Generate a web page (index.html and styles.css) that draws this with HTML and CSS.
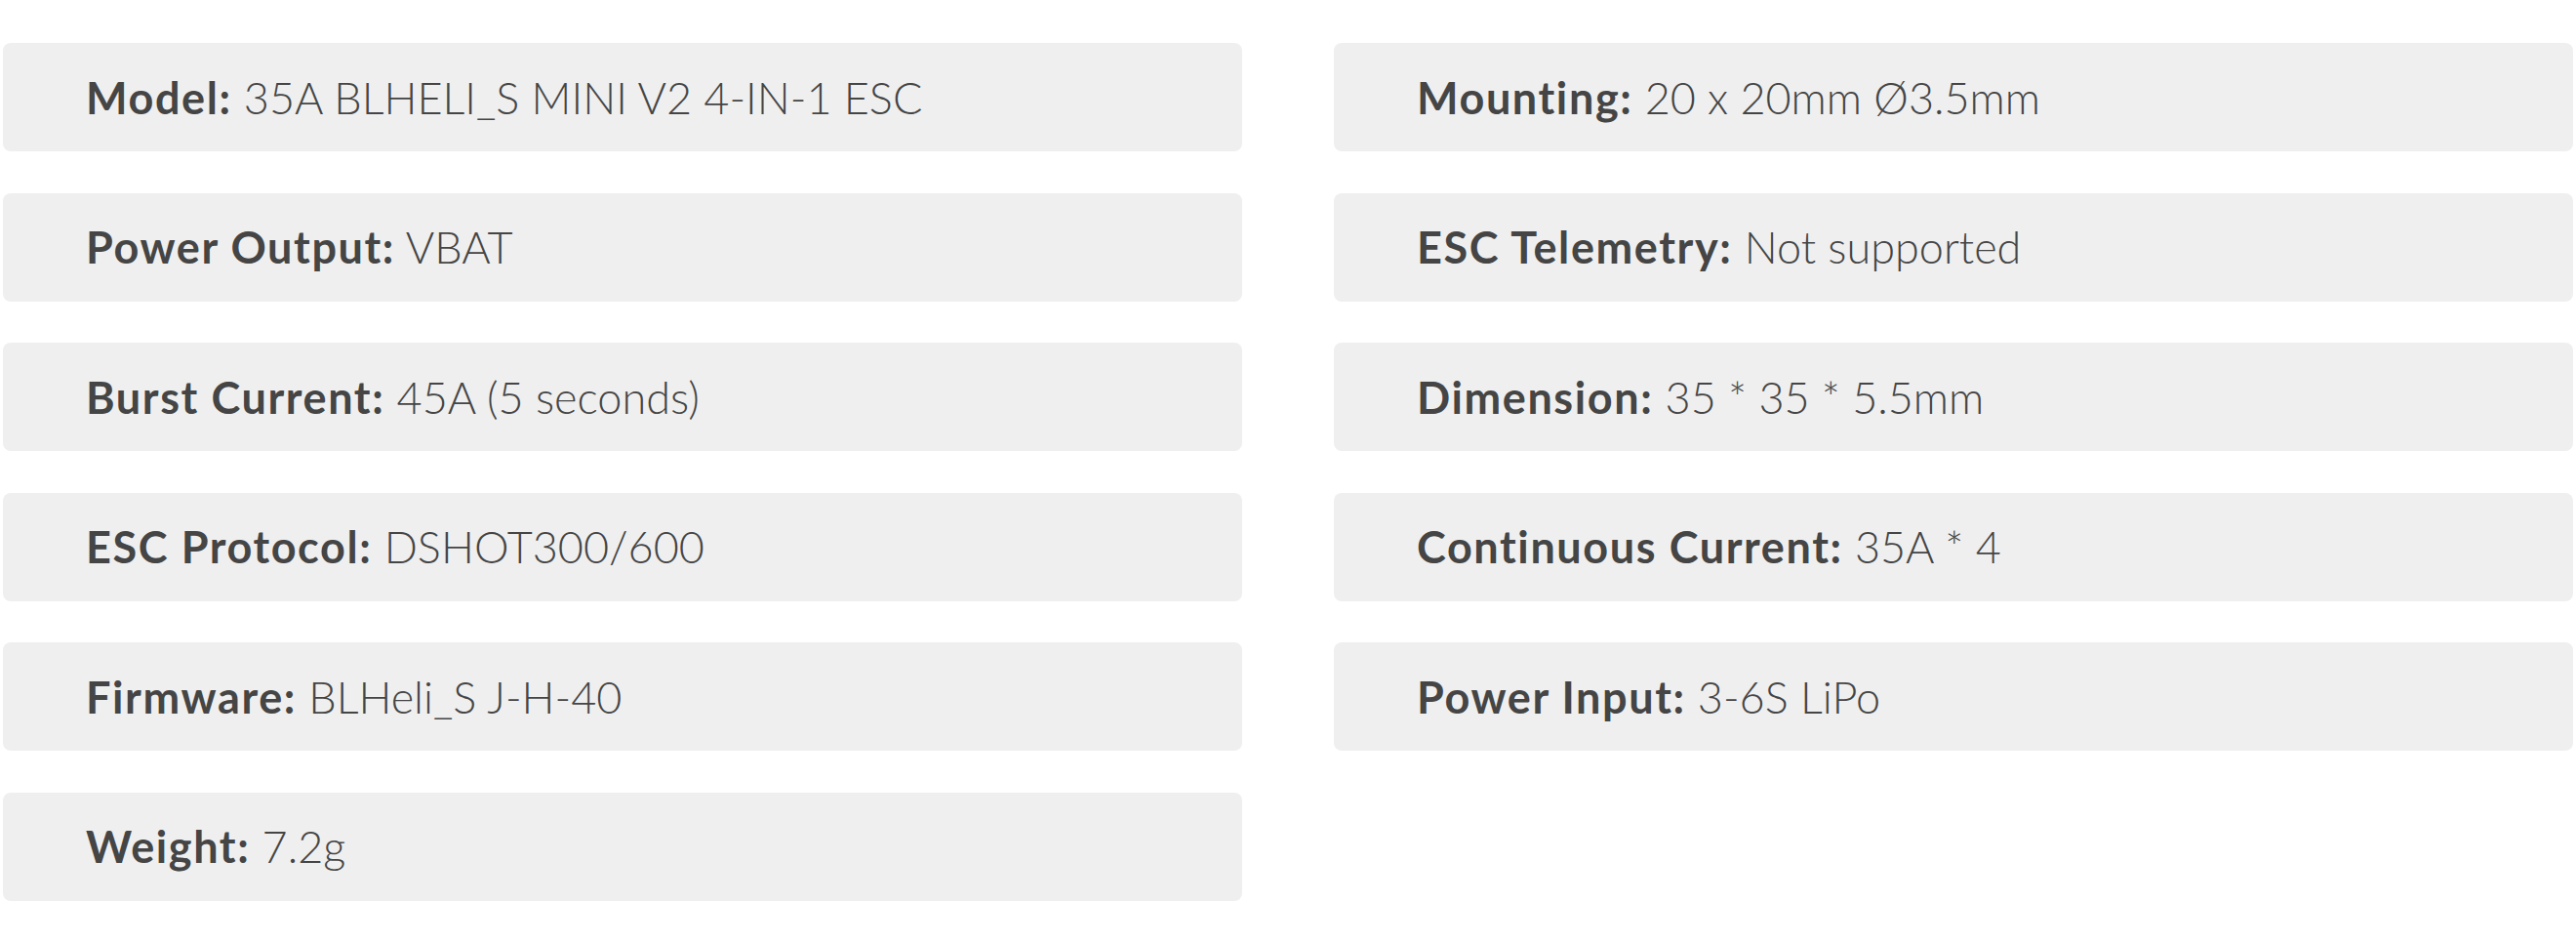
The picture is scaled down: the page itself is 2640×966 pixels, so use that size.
FILE: index.html
```html
<!DOCTYPE html>
<html lang="en">
<head>
<meta charset="utf-8">
<title>Specifications</title>
<link rel="stylesheet" href="styles.css">
</head>
<body>
<div class="specs">
  <ul class="spec-col">
    <li class="spec"><strong>Model:</strong> 35A BLHELI_S MINI V2 4-IN-1 ESC</li>
    <li class="spec"><strong>Power Output:</strong> VBAT</li>
    <li class="spec"><strong>Burst Current:</strong> 45A (5 seconds)</li>
    <li class="spec"><strong>ESC Protocol:</strong> DSHOT300/600</li>
    <li class="spec"><strong>Firmware:</strong> BLHeli_S J-H-40</li>
    <li class="spec"><strong>Weight:</strong> 7.2g</li>
  </ul>
  <ul class="spec-col">
    <li class="spec"><strong>Mounting:</strong> 20 x 20mm Ø3.5mm</li>
    <li class="spec"><strong>ESC Telemetry:</strong> Not supported</li>
    <li class="spec"><strong>Dimension:</strong> 35 * 35 * 5.5mm</li>
    <li class="spec"><strong>Continuous Current:</strong> 35A * 4</li>
    <li class="spec"><strong>Power Input:</strong> 3-6S LiPo</li>
  </ul>
</div>
</body>
</html>
```
FILE: styles.css
```css
html, body {
  margin: 0;
  padding: 0;
  background: #ffffff;
}

body {
  font-family: "Lato", "Liberation Sans", sans-serif;
  color: #454545;
}

.specs {
  display: flex;
  gap: 94px;
  padding: 44px 3px 0 3px;
}

.spec-col {
  list-style: none;
  margin: 0;
  padding: 0;
  width: 1270px;
  display: flex;
  flex-direction: column;
  gap: 42.6px;
}

.spec {
  height: 111px;
  box-sizing: border-box;
  display: flex;
  align-items: center;
  padding-left: 85px;
  background: #efefef;
  border-radius: 8px;
  font-size: 45px;
  font-weight: 300;
  white-space: pre;
}

.spec strong {
  font-weight: 700;
  letter-spacing: 1.6px;
}
```
